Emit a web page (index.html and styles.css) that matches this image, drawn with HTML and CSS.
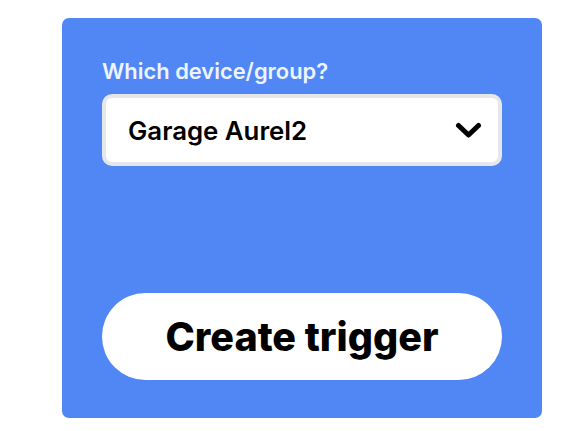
FILE: index.html
```html
<!DOCTYPE html>
<html>
<head>
<meta charset="utf-8">
<link rel="stylesheet" href="styles.css">
</head>
<body>
<div class="card">
  <label class="label">Which device/group?</label>
  <div class="select">
    <span class="select-text">Garage Aurel2</span>
    <svg class="chev" width="27" height="17" viewBox="0 0 27 17"><path d="M3.5 3.5 L13.5 13 L23.5 3.5" fill="none" stroke="#000" stroke-width="5" stroke-linecap="round" stroke-linejoin="round"/></svg>
  </div>
  <button class="btn">Create trigger</button>
</div>
</body>
</html>
```
FILE: styles.css
```css
html, body { margin: 0; padding: 0; background: #fff; }
body { width: 583px; height: 431px; font-family: Inter, "Noto Sans", sans-serif; }
.card {
  margin: 18px 0 0 62px;
  width: 480px;
  height: 400px;
  box-sizing: border-box;
  background: #5087f5;
  border-radius: 7px;
  padding: 40px 40px 0 40px;
  display: flex;
  flex-direction: column;
}
.label {
  color: #eef4ff;
  font-weight: 600;
  font-size: 21.9px;
  line-height: 26px;
  margin-bottom: 10px;
}
.select {
  height: 72px;
  box-sizing: border-box;
  background: #fff;
  border: 4px solid #e6e7ea;
  border-radius: 10px;
  display: flex;
  align-items: center;
  justify-content: space-between;
  padding: 0 16px 0 22px;
}
.select-text {
  font-size: 25.8px;
  font-weight: 600;
  color: #000;
}
.chev { display: block; }
.btn {
  margin-top: 127px;
  height: 87px;
  border: none;
  border-radius: 44px;
  background: #fff;
  font-family: Inter, "Noto Sans", sans-serif;
  font-weight: 800;
  font-size: 39.5px;
  color: #000;
  padding: 0;
}
```
